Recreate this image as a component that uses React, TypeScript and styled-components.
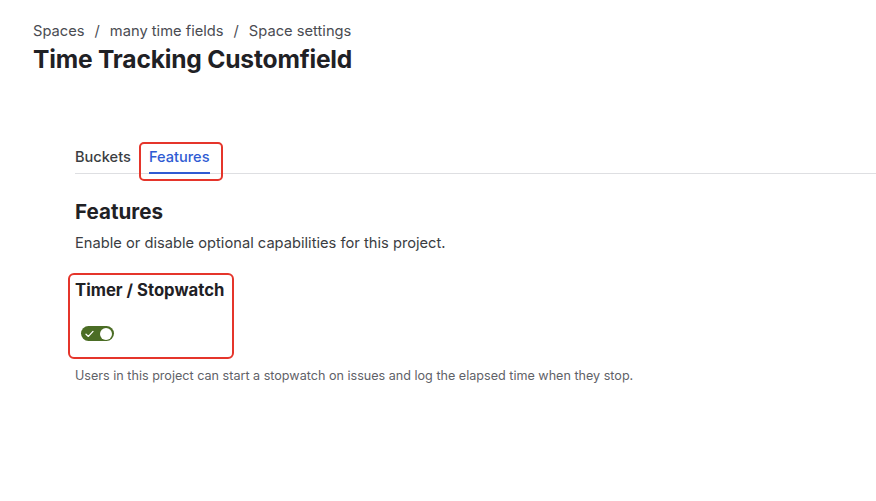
import styled, { createGlobalStyle } from "styled-components";

const Global = createGlobalStyle`
  body {
    margin: 0;
    background: #fff;
    font-family: Inter, "Noto Sans", "Liberation Sans", sans-serif;
    color: #1f2125;
  }
`;

const Page = styled.div`
  padding: 21px 0 0 33px;
`;

const Crumbs = styled.nav`
  display: flex;
  gap: 10px;
  font-size: 14.7px;
  line-height: 20px;
  color: #4a4c52;
`;

const Title = styled.h1`
  margin: 3px 0 0;
  font-size: 24.6px;
  line-height: 30px;
  font-weight: 700;
  letter-spacing: -0.2px;
  color: #1f2125;
`;

const Body = styled.div`
  margin: 66px 0 0 42px;
`;

const TabBar = styled.div`
  display: flex;
  gap: 18px;
  border-bottom: 1px solid #dedfe2;
`;

const Tab = styled.div<{ $active?: boolean; $marked?: boolean }>`
  position: relative;
  padding: 8px 0 6px;
  font-size: 14.6px;
  line-height: 18px;
  font-weight: 500;
  color: ${(p) => (p.$active ? "#2f5bd3" : "#3b3d42")};
  border-bottom: 2px solid ${(p) => (p.$active ? "#2f5bd3" : "transparent")};
  margin-bottom: -1px;

  ${(p) =>
    p.$marked &&
    `
    &::after {
      content: "";
      position: absolute;
      left: -10px;
      right: -13px;
      top: 2px;
      bottom: -9px;
      border: 2px solid #e5352b;
      border-radius: 5px;
    }
  `}
`;

const Heading = styled.h2`
  margin: 25px 0 0;
  font-size: 20.6px;
  line-height: 26px;
  font-weight: 700;
  color: #1f2125;
`;

const Desc = styled.p`
  margin: 9px 0 0;
  font-size: 14.7px;
  line-height: 18px;
  color: #3b3d42;
`;

const Feature = styled.div`
  position: relative;
  margin-top: 27px;
  width: 155px;

  &::after {
    content: "";
    position: absolute;
    left: -7px;
    right: -4px;
    top: -6px;
    bottom: -18px;
    border: 2px solid #e5352b;
    border-radius: 6px;
  }
`;

const FeatureName = styled.div`
  font-size: 16.7px;
  line-height: 22px;
  font-weight: 700;
  color: #1f2125;
`;

const Toggle = styled.div<{ $on: boolean }>`
  margin: 25px 0 0 6px;
  width: 33px;
  height: 15px;
  border-radius: 8px;
  background: ${(p) => (p.$on ? "#4b6d25" : "#c5c7cc")};
  display: flex;
  align-items: center;
  justify-content: space-between;
  padding: 0 2px 0 4px;
  box-sizing: border-box;
`;

const Knob = styled.span`
  width: 12px;
  height: 12px;
  border-radius: 50%;
  background: #fff;
`;

const Help = styled.p`
  margin: 27px 0 0;
  font-size: 12.6px;
  line-height: 16px;
  color: #5f6268;
`;

export default function App() {
  return (
    <>
      <Global />
      <Page>
        <Crumbs>
          <span>Spaces</span>
          <span>/</span>
          <span>many time fields</span>
          <span>/</span>
          <span>Space settings</span>
        </Crumbs>
        <Title>Time Tracking Customfield</Title>
        <Body>
          <TabBar>
            <Tab>Buckets</Tab>
            <Tab $active $marked>
              Features
            </Tab>
          </TabBar>
          <Heading>Features</Heading>
          <Desc>Enable or disable optional capabilities for this project.</Desc>
          <Feature>
            <FeatureName>Timer / Stopwatch</FeatureName>
            <Toggle $on>
              <svg width="9" height="8" viewBox="0 0 9 8">
                <path d="M1 4.2 L3.4 6.4 L8 1.4" fill="none" stroke="#fff" strokeWidth="1.3" strokeLinecap="round" strokeLinejoin="round" />
              </svg>
              <Knob />
            </Toggle>
          </Feature>
          <Help>Users in this project can start a stopwatch on issues and log the elapsed time when they stop.</Help>
        </Body>
      </Page>
    </>
  );
}
